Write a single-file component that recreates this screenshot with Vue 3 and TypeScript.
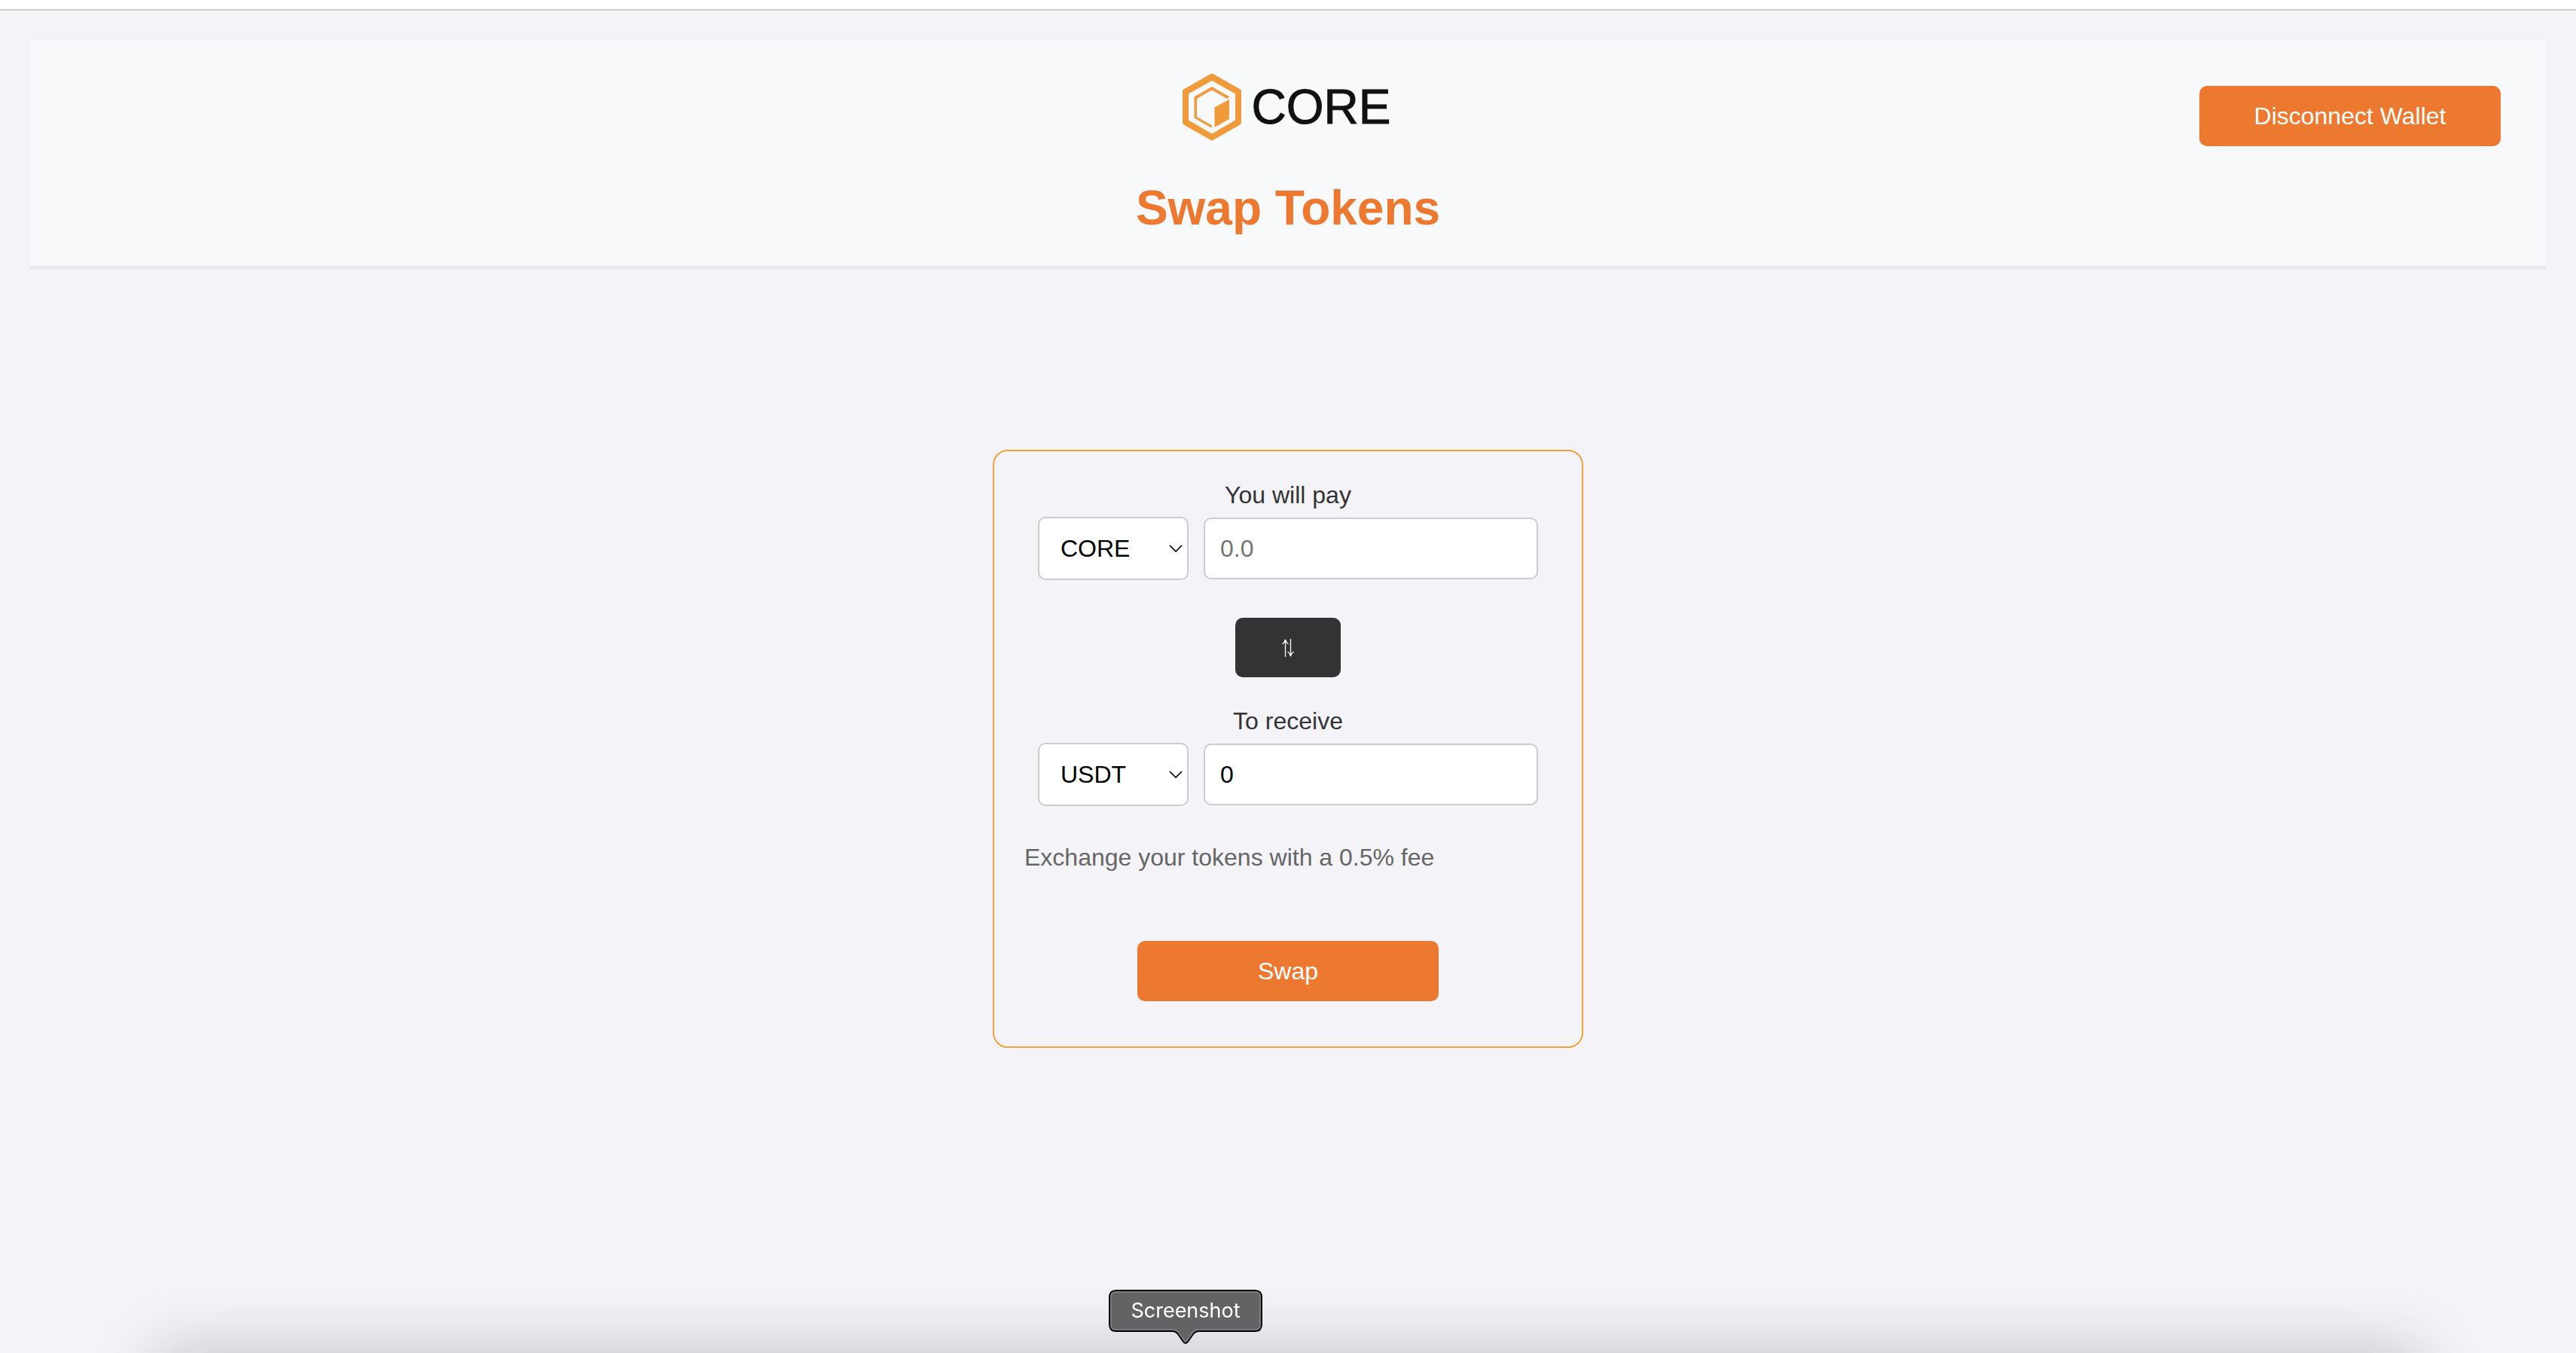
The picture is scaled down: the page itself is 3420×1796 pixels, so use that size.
<script setup lang="ts">
import { ref } from 'vue'

const tokens: string[] = ['CORE', 'USDT']

const payToken = ref('CORE')
const receiveToken = ref('USDT')
const payAmount = ref('')
const receiveAmount = ref('0')

function flipTokens(): void {
  const previous = payToken.value
  payToken.value = receiveToken.value
  receiveToken.value = previous
}
</script>

<template>
  <div class="page">
    <div class="browser-edge"></div>

    <header class="header">
      <div class="brand">
        <div class="logo">
          <svg class="logo-mark" viewBox="0 0 78 90" aria-hidden="true">
            <path
              fill-rule="evenodd"
              d="M37.5 1Q39 0 40.500 1L76.500 21.500Q78 22.500 78 24V66Q78 67.500 76.500 68.500L40.500 89Q39 90 37.500 89L1.500 68.500Q0 67.500 0 66V24Q0 22.500 1.500 21.500ZM39 10L8 27.500V62.500L39 80.500L70 62.500V27.500Z"
            />
            <path d="M39 18L62.500 31.500L59 34L39 22.500L19 34V58L39 69.500V72.500L37 72L15.500 59.500V31.500Z" />
            <path d="M62 35V61L42.500 72V45.500Z" />
          </svg>
          <span class="logo-text">CORE</span>
        </div>
        <h1 class="title">Swap Tokens</h1>
      </div>
      <button type="button" class="btn btn-primary wallet">Disconnect Wallet</button>
    </header>

    <main class="card">
      <label class="label" for="pay-amount">You will pay</label>
      <div class="row">
        <div class="picker">
          <select v-model="payToken" class="select" aria-label="Token to pay">
            <option v-for="token in tokens" :key="token" :value="token">{{ token }}</option>
          </select>
          <svg class="chevron" viewBox="0 0 18 10" aria-hidden="true"><path d="M1 1L9 9L17 1" /></svg>
        </div>
        <input id="pay-amount" v-model="payAmount" class="input" type="text" placeholder="0.0" />
      </div>

      <button type="button" class="btn btn-flip" aria-label="Switch tokens" @click="flipTokens">
        <svg class="flip-icon" viewBox="0 0 16 24" aria-hidden="true">
          <path d="M4.500 24V1M0.500 7Q3.500 5 4.500 1Q5.500 5 8.500 7M11.500 0V23M7.500 17Q10.500 19 11.500 23Q12.500 19 15.500 17" />
        </svg>
      </button>

      <label class="label" for="receive-amount">To receive</label>
      <div class="row">
        <div class="picker">
          <select v-model="receiveToken" class="select" aria-label="Token to receive">
            <option v-for="token in tokens" :key="token" :value="token">{{ token }}</option>
          </select>
          <svg class="chevron" viewBox="0 0 18 10" aria-hidden="true"><path d="M1 1L9 9L17 1" /></svg>
        </div>
        <input id="receive-amount" v-model="receiveAmount" class="input" type="text" />
      </div>

      <p class="fee">Exchange your tokens with a 0.5% fee</p>
      <button type="button" class="btn btn-primary">Swap</button>
    </main>

    <div class="dock-shadow"></div>
    <div class="tooltip" role="tooltip">
      <svg class="tooltip-shape" viewBox="0 0 204 72" aria-hidden="true">
        <path
          class="tooltip-outline"
          d="M10 1H194Q203 1 203 10V46Q203 55 194 55H120Q115 55 112 59L105 69Q102 73 99 69L92 59Q89 55 84 55H10Q1 55 1 46V10Q1 1 10 1Z"
        />
        <path
          class="tooltip-rim"
          d="M10 3H194Q201 3 201 10V46Q201 53 194 53H119Q114 53 111 57L104 67Q102 70 100 67L93 57Q90 53 85 53H10Q3 53 3 46V10Q3 3 10 3Z"
        />
      </svg>
      <span class="tooltip-text">Screenshot</span>
    </div>
  </div>
</template>

<style>
body {
  background: #f4f3f8;
}
</style>

<style scoped>
.page {
  min-height: 100vh;
  overflow: hidden;
  background: #f4f3f8;
  color: #333;
  font: 32px/36px "Liberation Sans", Arial, sans-serif;
}

.page *,
.page *::before {
  box-sizing: border-box;
}

.browser-edge {
  height: 14px;
  background: #fff;
  border-bottom: 2px solid #ccc;
}

.header {
  display: grid;
  grid-template-columns: 1fr auto 1fr;
  align-items: start;
  margin: 40px 40px 0;
  padding: 40px 60px;
  background: #f8f9fb;
  border-bottom: 4px solid #e9e9e9;
}

.brand {
  grid-column: 2;
  display: flex;
  flex-direction: column;
  align-items: center;
}

.logo {
  display: flex;
  align-items: center;
  gap: 14px;
  height: 96px;
  padding-right: 4px;
}

.logo-mark {
  width: 78px;
  height: 90px;
  fill: #f09a3a;
}

.logo-text {
  color: #111;
  font-size: 64px;
  line-height: 72px;
  -webkit-text-stroke: 1px #111;
}

.title {
  margin: 49px 0 0;
  color: #ed7930;
  font-size: 64px;
  line-height: 74px;
  font-weight: 700;
}

.btn {
  height: 80px;
  padding: 0;
  border: 0;
  border-radius: 10px;
  color: #fff;
  font: inherit;
  cursor: pointer;
}

.btn-primary {
  width: 400px;
  background: #ed7930;
}

.wallet {
  justify-self: end;
  margin-top: 20px;
}

.card {
  display: flex;
  flex-direction: column;
  align-items: center;
  box-sizing: border-box;
  width: 784px;
  max-width: 100%;
  margin: 240px auto 0;
  padding: 40px 40px 60px;
  border: 2px solid #f0a33c;
  border-radius: 20px;
}

.label {
  margin-bottom: 11px;
}

.row {
  display: flex;
  align-items: center;
  gap: 20px;
  width: 664px;
  margin-bottom: 50px;
}

.picker {
  position: relative;
  flex: none;
  width: 200px;
  height: 84px;
}

.select,
.input {
  border: 2px solid #ccc;
  border-radius: 10px;
  background: #fff;
  color: #000;
  font: inherit;
  outline: 0;
}

.select {
  appearance: none;
  width: 100%;
  height: 100%;
  padding: 0 40px 0 28px;
}

.chevron {
  position: absolute;
  top: 37px;
  right: 8px;
  width: 18px;
  height: 10px;
  fill: none;
  stroke: #000;
  stroke-width: 1.7;
  pointer-events: none;
}

.input {
  flex: 1;
  min-width: 0;
  height: 82px;
  padding: 0 20px;
}

.input::placeholder {
  color: #757575;
  opacity: 1;
}

.btn-flip {
  display: flex;
  align-items: center;
  justify-content: center;
  width: 140px;
  height: 79px;
  margin-bottom: 40px;
  background: #333;
}

.flip-icon {
  width: 16px;
  height: 24px;
  fill: none;
  stroke: #fff;
  stroke-width: 1.3;
}

.fee {
  align-self: flex-start;
  margin: 0 0 93px;
  color: #666;
}

/* Soft shade cast upwards by the dock below the window. */
.dock-shadow {
  position: fixed;
  right: 210px;
  bottom: -200px;
  left: 210px;
  height: 200px;
  box-shadow: 0 0 90px rgba(0, 0, 0, 0.22);
}

.tooltip {
  position: fixed;
  bottom: 12px;
  left: calc(50% - 238px);
  width: 204px;
  height: 72px;
  text-align: center;
}

.tooltip-shape {
  position: absolute;
  inset: 0;
  width: 204px;
  height: 72px;
}

.tooltip-outline {
  fill: #636365;
  stroke: #000;
  stroke-width: 2;
}

.tooltip-rim {
  fill: none;
  stroke: #7b7b7d;
  stroke-width: 2;
}

.tooltip-text {
  position: relative;
  color: #fff;
  font: 27px/56px Inter, sans-serif;
}
</style>
